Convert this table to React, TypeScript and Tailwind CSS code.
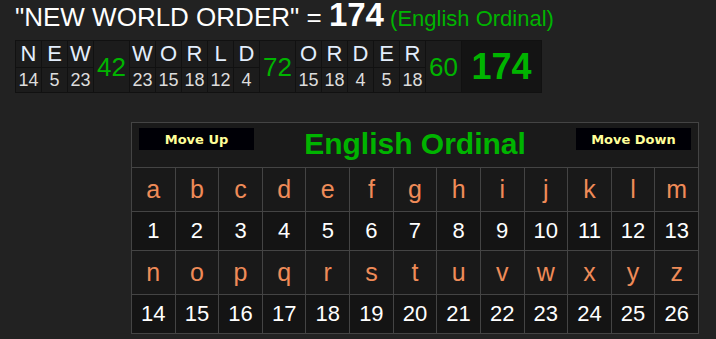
import React from 'react';

const words = ['NEW', 'WORLD', 'ORDER'];

const ordinal = (ch: string) => ch.toLowerCase().charCodeAt(0) - 96;

const alphabet = 'abcdefghijklmnopqrstuvwxyz'.split('');

// breakdown of the phrase, letter by letter
const Breakdown: React.FC = () => {
  const total = words.reduce((sum, w) => sum + w.split('').reduce((s, c) => s + ordinal(c), 0), 0);

  return (
    <div className="flex w-fit bg-[#111] p-px gap-px">
      {words.map((word) => {
        const sum = word.split('').reduce((s, c) => s + ordinal(c), 0);
        return (
          <React.Fragment key={word}>
            <div className="grid grid-flow-col grid-rows-[26px_24px] gap-px">
              {word.split('').map((c, i) => (
                <React.Fragment key={i}>
                  <div className="w-[25px] bg-[#1c1c1c] flex items-center justify-center text-[22px] leading-none text-[#e3eefc]">
                    {c}
                  </div>
                  <div className="w-[25px] bg-[#1c1c1c] flex items-center justify-center text-[18px] leading-none text-[#dddddd]">
                    {ordinal(c)}
                  </div>
                </React.Fragment>
              ))}
            </div>
            <div className="w-[35px] bg-[#1c1c1c] flex items-center justify-center text-[26px] leading-none text-[#00b400]">
              {sum}
            </div>
          </React.Fragment>
        );
      })}
      <div className="w-[79px] bg-[#141414] flex items-center justify-center text-[36px] font-bold leading-none text-[#00b400]">
        {total}
      </div>
    </div>
  );
};

const CipherTable: React.FC = () => {
  const rows = [alphabet.slice(0, 13), alphabet.slice(13)];

  return (
    <div className="w-[568px] ml-[131px] bg-[#444] p-px grid grid-cols-[repeat(13,minmax(0,1fr))] gap-px">
      {/* Header */}
      <div className="col-span-13 h-[44px] bg-[#1a1a1a] flex items-start justify-between px-[7px] pt-[5px]">
        <button className="w-[115px] h-[22px] bg-[#000006] text-[#ffff99] text-[13px] font-bold leading-none font-['DejaVu_Sans',sans-serif]">
          Move Up
        </button>
        <div className="text-[30px] font-bold leading-[34px] -mt-[1px] text-[#00b400]">English Ordinal</div>
        <button className="w-[115px] h-[22px] bg-[#000006] text-[#ffff99] text-[13px] font-bold leading-none font-['DejaVu_Sans',sans-serif]">
          Move Down
        </button>
      </div>

      {rows.map((row, r) => (
        <React.Fragment key={r}>
          {row.map((c) => (
            <div key={c} className="h-[43px] bg-[#191919] flex items-center justify-center text-[25px] leading-none text-[#ef8b58]">
              {c}
            </div>
          ))}
          {row.map((c) => (
            <div key={c + 'n'} className="h-[38px] bg-[#141414] flex items-center justify-center text-[22px] leading-none text-white">
              {ordinal(c)}
            </div>
          ))}
        </React.Fragment>
      ))}
    </div>
  );
};

export default function App() {
  return (
    <div className="min-h-screen bg-[#222222] font-['Liberation_Sans',Arial,sans-serif]">
      <div className="pl-[15px] h-[34px] flex items-baseline whitespace-nowrap">
        <span className="text-[26px] leading-[30px] text-white whitespace-pre">"NEW WORLD ORDER" = </span>
        <span className="text-[33px] leading-[30px] font-bold text-white">174</span>
        <span className="text-[22px] leading-[30px] text-[#00b400] whitespace-pre"> (English Ordinal)</span>
      </div>

      <div className="pl-[15px] mt-[6px]">
        <Breakdown />
      </div>

      <div className="mt-[29px]">
        <CipherTable />
      </div>
    </div>
  );
}
